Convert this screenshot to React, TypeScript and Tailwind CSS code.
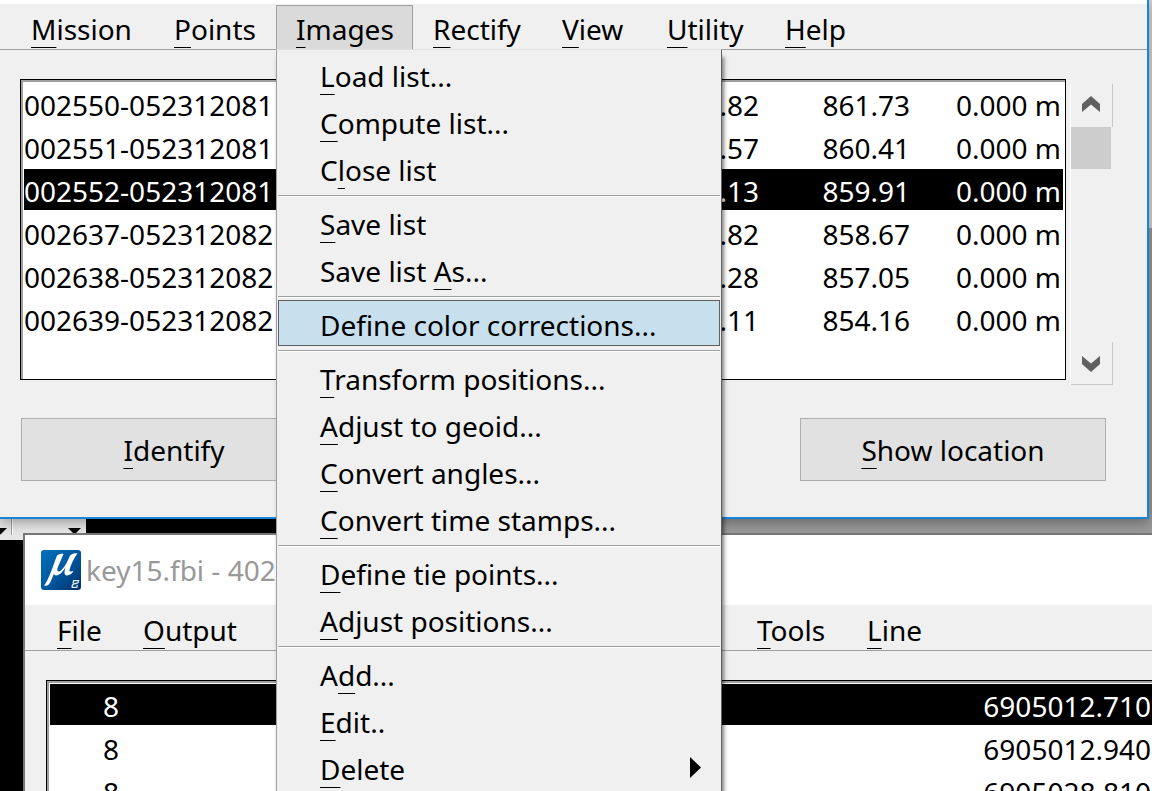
import React from "react";

/** Text with the keyboard mnemonic underlined. */
function Mnemonic({ text, at }: { text: string; at?: number }) {
  if (at === undefined) return <span className="whitespace-pre">{text}</span>;
  return (
    <span className="whitespace-pre">
      {text.slice(0, at)}
      <span className="underline decoration-1 underline-offset-[7px] [text-decoration-skip-ink:none]">{text[at]}</span>
      {text.slice(at + 1)}
    </span>
  );
}

type MenuEntry = { text: string; at?: number; active?: boolean; submenu?: boolean };

const imagesMenu: MenuEntry[][] = [
  [
    { text: "Load list...", at: 0 },
    { text: "Compute list...", at: 0 },
    { text: "Close list", at: 1 },
  ],
  [
    { text: "Save list", at: 0 },
    { text: "Save list As...", at: 10 },
  ],
  [{ text: "Define color corrections...", active: true }],
  [
    { text: "Transform positions...", at: 0 },
    { text: "Adjust to geoid...", at: 0 },
    { text: "Convert angles...", at: 0 },
    { text: "Convert time stamps...", at: 0 },
  ],
  [
    { text: "Define tie points...", at: 0 },
    { text: "Adjust positions...", at: 0 },
  ],
  [
    { text: "Add...", at: 1 },
    { text: "Edit..", at: 0 },
    { text: "Delete", at: 0, submenu: true },
  ],
];

function ImagesMenu() {
  return (
    <div
      role="menu"
      aria-label="Images"
      className="absolute left-0 top-full z-20 w-[446px] border-l border-r border-t border-l-[#a0a0a0] border-r-[#606060] border-t-[#dfdfdf] bg-[#f0f0f0] px-px pt-px shadow-[2px_8px_4px_rgba(0,0,0,0.5)]"
    >
      {imagesMenu.map((group, g) => (
        <React.Fragment key={g}>
          {g > 0 && (
            <div role="separator" className="h-[7px] pt-[3px]">
              <div className="h-[2px] border-t border-[#a0a0a0] bg-white" />
            </div>
          )}
          {group.map((item) => (
            <button
              key={item.text}
              role="menuitem"
              type="button"
              className={
                item.active
                  ? "mb-px flex h-[46px] w-full items-center justify-between border border-[#606060] bg-[#c8dfee] pl-[41px] pr-[18px] pt-1 text-left"
                  : "flex h-[47px] w-full items-center justify-between border border-transparent pl-[41px] pr-[18px] pt-[3px] text-left"
              }
            >
              <Mnemonic text={item.text} at={item.at} />
              {item.submenu && (
                <svg width="11" height="21" viewBox="0 0 11 21" className="mb-1" aria-hidden="true">
                  <path d="M0 0L11 10.5L0 21Z" fill="#000" />
                </svg>
              )}
            </button>
          ))}
        </React.Fragment>
      ))}
    </div>
  );
}

const missionBar = [
  { text: "Mission", width: "w-[143px]" },
  { text: "Points", width: "w-[122px]" },
  { text: "Images", width: "w-[137px]", open: true },
  { text: "Rectify", width: "w-[129px]" },
  { text: "View", width: "w-[105px]" },
  { text: "Utility", width: "w-[118px]" },
  { text: "Help", width: "w-[104px]" },
];

const images = [
  ["002550-052312081", ".82", "861.73", "0.000 m"],
  ["002551-052312081", ".57", "860.41", "0.000 m"],
  ["002552-052312081", ".13", "859.91", "0.000 m"],
  ["002637-052312082", ".82", "858.67", "0.000 m"],
  ["002638-052312082", ".28", "857.05", "0.000 m"],
  ["002639-052312082", ".11", "854.16", "0.000 m"],
];

function ImageTable() {
  return (
    <table aria-label="Image list" className="w-full table-fixed border-separate border-spacing-0">
      <colgroup>
        <col />
        <col className="w-[151px]" />
        <col className="w-[151px]" />
        <col className="w-[151px]" />
      </colgroup>
      <tbody>
        {images.map((row, i) => (
          <tr key={row[0]} className={i === 2 ? "text-white" : "text-black"}>
            {row.map((cell, c) => (
              <td
                key={c}
                className={
                  (i === 2 ? "bg-black " : "bg-white ") +
                  (c === 0 ? "text-left " : "pr-[2px] text-right ") +
                  "h-[43px] border-b-2 border-transparent bg-clip-padding p-0 pt-[3px] leading-[38px]"
                }
              >
                {cell}
              </td>
            ))}
          </tr>
        ))}
      </tbody>
    </table>
  );
}

function ScrollBar() {
  return (
    <div className="mt-[5px] flex h-[301px] w-[43px] flex-col border-l border-white">
      <button
        type="button"
        aria-label="Scroll up"
        className="flex h-[43px] items-start border-r border-[#c8c8c8] pl-[11px] pt-3"
      >
        <svg width="18" height="16" viewBox="0 0 18 16" aria-hidden="true">
          <path d="M0 8L9 0L18 8V16L9 8.5L0 16Z" fill="#606060" />
        </svg>
      </button>
      <div className="mr-[2px] h-[42px] bg-[#cdcdcd]" />
      <div className="flex-1" />
      <button
        type="button"
        aria-label="Scroll down"
        className="flex h-[43px] items-start border-b border-r border-[#c8c8c8] pl-[11px] pt-[14px]"
      >
        <svg width="18" height="16" viewBox="0 0 18 16" aria-hidden="true">
          <path d="M0 0L9 7.5L18 0V8L9 16L0 8Z" fill="#606060" />
        </svg>
      </button>
    </div>
  );
}

function MissionWindow() {
  return (
    <section className="relative z-10 mr-[3px] border-b-2 border-r-2 border-[#1883d7] bg-[#f0f0f0] shadow-[0_3px_12px_rgba(0,0,0,0.35)]">
      <div className="h-1 bg-white" />
      <nav aria-label="Mission menu" className="flex h-[46px] border-b border-[#a0a0a0] pl-[11px] pt-px">
        {missionBar.map((m) => (
          <div key={m.text} className={"relative " + m.width}>
            <button
              type="button"
              className={
                m.open
                  ? "flex h-full w-full items-center border-l border-r border-t border-[#a0a0a0] bg-[#dadada] pl-[19px] pt-[3px]"
                  : "flex h-full w-full items-center pl-5 pt-1"
              }
            >
              <Mnemonic text={m.text} at={0} />
            </button>
            {m.open && <ImagesMenu />}
          </div>
        ))}
      </nav>
      <div className="flex items-start gap-1 pl-5 pr-[34px] pt-[29px]">
        <div className="h-[301px] flex-1 border border-black bg-white">
          <div className="h-full border-l-2 border-t-2 border-[#a0a0a0] pl-px pr-[2px] pt-px">
            <ImageTable />
          </div>
        </div>
        <ScrollBar />
      </div>
      <div className="flex justify-between pb-9 pl-[21px] pr-[41px] pt-[33px]">
        <button type="button" className="h-[63px] w-[306px] border border-[#adadad] bg-[#e1e1e1]">
          <Mnemonic text="Identify" at={0} />
        </button>
        <button type="button" className="h-[63px] w-[306px] border border-[#adadad] bg-[#e1e1e1]">
          <Mnemonic text="Show location" at={0} />
        </button>
      </div>
    </section>
  );
}

function AppIcon() {
  return (
    <svg width="40" height="40" viewBox="0 0 40 40" aria-hidden="true">
      <defs>
        <linearGradient id="blue" x1="0" y1="0" x2="1" y2="1">
          <stop offset="0" stopColor="#0070bb" />
          <stop offset="0.55" stopColor="#00559c" />
          <stop offset="1" stopColor="#003068" />
        </linearGradient>
      </defs>
      <rect width="40" height="40" rx="3" fill="url(#blue)" />
      <path
        d="M16 5.500C18 4 20.500 3.500 22.500 4L16.500 18C15.500 21.500 17.500 22.500 20 20.500C24 17 27 10 29 5.500C31 3.500 34 3 36.500 3.200C33 8 29.500 15.500 28.500 20C28.200 22 30.500 22 32.500 20.500C31.500 23.500 28.500 25.800 25.500 25.400C22.800 25 23.300 21 24.500 17.500C21.500 22 18 25.800 15 25.500C13.500 25.300 13 24.500 13 23.500C11 28.500 9.500 33 7.500 34.800C6.500 35.800 4.500 36 3 35.800C8 29 12 16 16 5.500Z"
        fill="#fff"
      />
      <path
        d="M32 33.300L32.600 30.700H37.600L37 32.800L33.500 33.600H36.300M33.500 33.600C31.500 34.300 30.800 35.500 31.200 37.300H35.800L36.400 35.200"
        fill="none"
        stroke="#dce8f3"
        strokeWidth="1.300"
      />
    </svg>
  );
}

const lines = [
  ["8", "6905012.710"],
  ["8", "6905012.940"],
  ["8", "6905028.810"],
];

function KeyWindow() {
  return (
    <section className="relative ml-[23px] mt-[14px] h-[258px] overflow-hidden border-l-2 border-t-2 border-[#777777] bg-[#f0f0f0]">
      <header className="flex h-[70px] items-center gap-[5px] bg-white pb-px pl-4 text-[#999999]">
        <AppIcon />
        <h1 className="whitespace-pre">key15.fbi - 402</h1>
      </header>
      <nav aria-label="Line menu" className="flex h-[46px] border-b border-[#a0a0a0] pl-3">
        <button type="button" className="flex w-[86px] items-center pl-5 pt-[5px]">
          <Mnemonic text="File" at={0} />
        </button>
        <button type="button" className="mr-[479px] flex w-[135px] items-center pl-5 pt-[5px]">
          <Mnemonic text="Output" at={0} />
        </button>
        <button type="button" className="flex w-[110px] items-center pl-5 pt-[5px]">
          <Mnemonic text="Tools" at={0} />
        </button>
        <button type="button" className="flex w-[94px] items-center pl-5 pt-[5px]">
          <Mnemonic text="Line" at={0} />
        </button>
      </nav>
      <div className="ml-[21px] mt-[29px] border-l border-t border-black bg-white">
        <div className="border-l-2 border-t-2 border-[#a0a0a0] pl-px pt-px">
          <table aria-label="Lines" className="w-full table-fixed border-separate border-spacing-0">
            <tbody>
              {lines.map((row, i) => (
                <tr key={i} className={i === 0 ? "text-white" : "text-black"}>
                  {row.map((cell, c) => (
                    <td
                      key={c}
                      className={
                        (i === 0 ? "bg-black " : "bg-white ") +
                        (c === 0 ? "pl-[53px] text-left " : "pr-px text-right ") +
                        "h-[43px] border-b-2 border-transparent bg-clip-padding p-0 pt-[3px] leading-[38px]"
                      }
                    >
                      {cell}
                    </td>
                  ))}
                </tr>
              ))}
            </tbody>
          </table>
        </div>
      </div>
    </section>
  );
}

/** What shows between and beside the two windows. */
function Desktop() {
  return (
    <div aria-hidden="true" className="absolute inset-0 flex flex-col bg-black">
      <div className="h-[228px] bg-[#d4d4d4]" />
      <div className="flex h-[312px]">
        <div className="flex w-[86px] items-end bg-[#e6e6e6]">
          <svg width="86" height="21" viewBox="0 0 86 21">
            <path d="M-6 9H7L0.500 15.500Z" fill="#000" />
            <path d="M68 9H81L74.500 15.500Z" fill="#000" />
            <path d="M11.500 0V16" stroke="#a0a0a0" />
            <path d="M12.500 0V16" stroke="#fff" />
          </svg>
        </div>
        <div className="flex-1 bg-black" />
        <div className="w-1/2 bg-[#999999]" />
      </div>
    </div>
  );
}

export default function App() {
  return (
    <main className="relative min-h-screen overflow-hidden bg-black font-['Noto_Sans',sans-serif] text-[28px] leading-[38px] text-black">
      <Desktop />
      <MissionWindow />
      <KeyWindow />
    </main>
  );
}
